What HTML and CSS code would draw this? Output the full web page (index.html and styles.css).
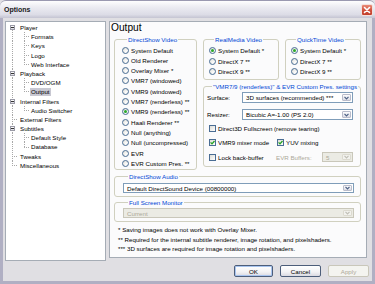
FILE: index.html
```html
<!DOCTYPE html>
<html lang="en">
<head>
  <meta charset="UTF-8" />
  <meta name="viewport" content="width=device-width, initial-scale=1.0"/>
  <title>Options</title>
  <link rel="stylesheet" href="styles.css">
</head>
<body>
  <div class="window">

    <!-- Title bar -->
    <div class="titlebar">
      <span class="title">Options</span>
      <span class="close-btn">
        <svg width="12" height="12" viewBox="0 0 12 12">
          <path d="M3.5 3.5 L8.5 8.5 M8.5 3.5 L3.5 8.5" stroke="#fff" stroke-width="1.6" stroke-linecap="round"/>
        </svg>
      </span>
    </div>

    <div class="dialog">
      <div class="main">

        <!-- Page tree -->
        <ul class="tree">
          <li class="root first"><span class="toggle"></span>Player</li>
          <li class="child">Formats</li>
          <li class="child">Keys</li>
          <li class="child">Logo</li>
          <li class="child last">Web Interface</li>
          <li class="root"><span class="toggle"></span>Playback</li>
          <li class="child">DVD/OGM</li>
          <li class="child last"><span class="selected">Output</span></li>
          <li class="root"><span class="toggle"></span>Internal Filters</li>
          <li class="child last">Audio Switcher</li>
          <li class="root leaf">External Filters</li>
          <li class="root"><span class="toggle"></span>Subtitles</li>
          <li class="child">Default Style</li>
          <li class="child last">Database</li>
          <li class="root leaf">Tweaks</li>
          <li class="root leaf end">Miscellaneous</li>
        </ul>

        <!-- Output page -->
        <div class="page">
          <h1>Output</h1>

          <div class="video-row">
            <fieldset class="group ds-video">
              <legend>DirectShow Video</legend>
              <label class="radio"><span class="dot"></span>System Default</label>
              <label class="radio"><span class="dot"></span>Old Renderer</label>
              <label class="radio"><span class="dot"></span>Overlay Mixer *</label>
              <label class="radio"><span class="dot"></span>VMR7 (windowed)</label>
              <label class="radio"><span class="dot"></span>VMR9 (windowed)</label>
              <label class="radio"><span class="dot"></span>VMR7 (renderless) **</label>
              <label class="radio"><span class="dot checked"></span>VMR9 (renderless) **</label>
              <label class="radio"><span class="dot"></span>Haali Renderer **</label>
              <label class="radio"><span class="dot"></span>Null (anything)</label>
              <label class="radio"><span class="dot"></span>Null (uncompressed)</label>
              <label class="radio"><span class="dot"></span>EVR</label>
              <label class="radio"><span class="dot"></span>EVR Custom Pres. **</label>
            </fieldset>

            <div class="right-col">
              <div class="small-groups">
                <fieldset class="group small">
                  <legend>RealMedia Video</legend>
                  <label class="radio"><span class="dot checked"></span>System Default *</label>
                  <label class="radio"><span class="dot"></span>DirectX 7 **</label>
                  <label class="radio"><span class="dot"></span>DirectX 9 **</label>
                </fieldset>
                <fieldset class="group small">
                  <legend>QuickTime Video</legend>
                  <label class="radio"><span class="dot checked"></span>System Default *</label>
                  <label class="radio"><span class="dot"></span>DirectX 7 **</label>
                  <label class="radio"><span class="dot"></span>DirectX 9 **</label>
                </fieldset>
              </div>

              <fieldset class="group vmr">
                <legend>"VMR7/9 (renderless)" &amp; EVR Custom Pres. settings</legend>
                <div class="combo-row">
                  <span class="field-label">Surface:</span>
                  <div class="combo"><span class="combo-text">3D surfaces (recommended) ***</span><span class="combo-btn"></span></div>
                </div>
                <div class="combo-row resizer">
                  <span class="field-label">Resizer:</span>
                  <div class="combo"><span class="combo-text">Bicubic A=-1.00 (PS 2.0)</span><span class="combo-btn"></span></div>
                </div>
                <div class="check-row">
                  <label class="check"><span class="box"></span>Direct3D Fullscreen (remove tearing)</label>
                </div>
                <div class="check-row two">
                  <label class="check"><span class="box checked"></span>VMR9 mixer mode</label>
                  <label class="check"><span class="box checked"></span>YUV mixing</label>
                </div>
                <div class="check-row two">
                  <label class="check"><span class="box"></span>Lock back-buffer</label>
                  <div class="evr">
                    <span class="muted">EVR Buffers:</span>
                    <div class="combo disabled small-combo"><span class="combo-text">5</span><span class="combo-btn"></span></div>
                  </div>
                </div>
              </fieldset>
            </div>
          </div>

          <fieldset class="group wide audio">
            <legend>DirectShow Audio</legend>
            <div class="combo"><span class="combo-text">Default DirectSound Device (00800000)</span><span class="combo-btn"></span></div>
          </fieldset>

          <fieldset class="group wide monitor">
            <legend>Full Screen Monitor</legend>
            <div class="combo disabled"><span class="combo-text">Current</span><span class="combo-btn"></span></div>
          </fieldset>

          <div class="notes">
            <p>* Saving images does not work with Overlay Mixer.</p>
            <p>** Required for the internal subtitle renderer, image rotation, and pixelshaders.</p>
            <p>*** 3D surfaces are required for image rotation and pixelshaders.</p>
          </div>
        </div>
      </div>

      <!-- Dialog buttons -->
      <div class="buttons">
        <button class="default">OK</button>
        <button>Cancel</button>
        <button disabled>Apply</button>
      </div>
    </div>
  </div>
</body>
</html>
```

FILE: styles.css
```css
body {
  margin: 0;
  padding: 0;
  font-family: "Liberation Sans", Arial, sans-serif;
  font-size: 6.2px;
  color: #000;
  background: #e0dfe3;
}

.window {
  width: 375px;
  height: 284px;
  display: flex;
  flex-direction: column;
  overflow: hidden;
}

/* Title bar */
.titlebar {
  height: 18px;
  box-sizing: border-box;
  display: flex;
  align-items: center;
  justify-content: space-between;
  padding: 0 2px 0 4px;
  border-top: 1px solid #9a99b0;
  border-radius: 6px 6px 0 0;
  background: linear-gradient(#fefefe, #ececf2 35%, #dcdce6 80%, #c4c4d2);
}

.title {
  font-weight: bold;
  font-size: 7px;
  color: #1a1a1a;
}

.close-btn {
  width: 12px;
  height: 12px;
  box-sizing: border-box;
  display: flex;
  border: 1px solid #f4e0dc;
  border-radius: 2px;
  background: linear-gradient(#e88a76, #cf4f3c 55%, #c23f2c);
}

.close-btn svg {
  margin: -1px;
}

/* Dialog body */
.dialog {
  flex: 1;
  display: flex;
  flex-direction: column;
  background: #e0dfe3;
  border: 3px solid #b0afc3;
  border-top: none;
}

.main {
  display: flex;
  gap: 3px;
  padding: 3px 0 0 2px;
}

/* Tree */
.tree {
  --vdot: repeating-linear-gradient(to bottom, #a8a8a8 0 1px, transparent 1px 2px);
  --hdot: repeating-linear-gradient(to right, #a8a8a8 0 1px, transparent 1px 2px);
  width: 101px;
  height: 240px;
  box-sizing: border-box;
  margin: 0;
  padding: 1px 0 0 0;
  list-style: none;
  background: #fff;
  border: 1px solid #a5acb5;
}

.tree li {
  height: 9.2px;
  line-height: 9.2px;
  display: flex;
  align-items: center;
  white-space: nowrap;
}

.tree li.root {
  padding-left: 4px;
  background: var(--vdot) 6px 0 / 1px 100% no-repeat;
}

.tree li.root.first {
  background: var(--vdot) 6px 100% / 1px 50% no-repeat;
}

.tree li.root.leaf {
  padding-left: 14px;
  background:
    var(--hdot) 6px 50% / 6px 1px no-repeat,
    var(--vdot) 6px 0 / 1px 100% no-repeat;
}

.tree li.root.leaf.end {
  background:
    var(--hdot) 6px 50% / 6px 1px no-repeat,
    var(--vdot) 6px 0 / 1px 50% no-repeat;
}

.tree li.child {
  padding-left: 25px;
  background:
    var(--hdot) 18px 50% / 6px 1px no-repeat,
    var(--vdot) 18px 0 / 1px 100% no-repeat,
    var(--vdot) 6px 0 / 1px 100% no-repeat;
}

.tree li.child.last {
  background:
    var(--hdot) 18px 50% / 6px 1px no-repeat,
    var(--vdot) 18px 0 / 1px 50% no-repeat,
    var(--vdot) 6px 0 / 1px 100% no-repeat;
}

.toggle {
  width: 5px;
  height: 5px;
  box-sizing: border-box;
  margin-right: 5px;
  border: 1px solid #9a9aa6;
  background: linear-gradient(#fff, #dcdce4) ;
  display: flex;
  align-items: center;
  justify-content: center;
}

.toggle::after {
  content: "";
  width: 3px;
  height: 1px;
  background: #333;
}

.selected {
  background: #c8c8d2;
  padding: 0 1px;
  margin-left: -1px;
  line-height: 8px;
}

/* Page */
.page {
  width: 258px;
  height: 237px;
  box-sizing: border-box;
  border: 1px solid #a5acb5;
  background: #fbfbfc;
  padding: 0 5px 0 4px;
}

h1 {
  margin: 0 0 0 -3px;
  height: 11px;
  font-size: 10.2px;
  line-height: 11px;
  font-weight: normal;
}

.video-row {
  display: grid;
  grid-template-columns: 83px 158px;
  gap: 6px;
  margin-top: 2.5px;
}

.group {
  margin: 0;
  padding: 0;
  min-width: 0;
  border: 1px solid #d0d0bf;
  border-radius: 3px;
  display: flex;
  flex-direction: column;
}

.group legend {
  margin-left: 5px;
  padding: 0 1px;
  line-height: 7px;
  color: #0046d5;
  white-space: nowrap;
}

.ds-video {
  padding: 2.4px 0 1px 7px;
}

.radio {
  height: 10.3px;
  display: flex;
  align-items: center;
  white-space: nowrap;
}

.dot {
  width: 7px;
  height: 7px;
  box-sizing: border-box;
  margin-right: 2px;
  border: 1px solid #4a6d94;
  border-radius: 50%;
  background: radial-gradient(circle at 65% 70%, #fff, #dcdcd6);
  display: flex;
  align-items: center;
  justify-content: center;
}

.dot.checked::after {
  content: "";
  width: 3px;
  height: 3px;
  border-radius: 50%;
  background: #2aaa2a;
}

.right-col {
  display: flex;
  flex-direction: column;
}

.small-groups {
  display: grid;
  grid-template-columns: 1fr 1fr;
  gap: 6px;
}

.small {
  padding: 3.3px 0 2.2px 5px;
}

.vmr {
  margin-top: 3.5px;
  padding: 2px 7px 4px 3px;
}

.combo-row {
  display: flex;
  align-items: center;
}

.combo-row.resizer {
  margin-top: 5.7px;
}

.field-label {
  width: 35px;
}

.combo {
  flex: 1;
  height: 11px;
  box-sizing: border-box;
  display: flex;
  align-items: center;
  border: 1px solid #7f9db9;
  background: #fff;
  padding: 1px;
}

.combo-text {
  flex: 1;
  padding-left: 2px;
  white-space: nowrap;
  overflow: hidden;
}

.combo-btn {
  width: 9px;
  align-self: stretch;
  box-sizing: border-box;
  border: 1px solid #b9bccb;
  border-radius: 1px;
  background:
    url("data:image/svg+xml;utf8,<svg xmlns='http://www.w3.org/2000/svg' width='5' height='4'><path d='M0.5 0.8 L2.5 2.8 L4.5 0.8' fill='none' stroke='%234d6185' stroke-width='1.2'/></svg>") center / 5px 4px no-repeat,
    linear-gradient(#fdfdfe, #dadbe4);
}

.combo.disabled {
  border-color: #c9c7ba;
  background: #ebebe4;
  color: #aca899;
}

.combo.disabled .combo-btn {
  border-color: #dcdad0;
  background:
    url("data:image/svg+xml;utf8,<svg xmlns='http://www.w3.org/2000/svg' width='5' height='4'><path d='M0.5 0.8 L2.5 2.8 L4.5 0.8' fill='none' stroke='%23c0bfb6' stroke-width='1.2'/></svg>") center / 5px 4px no-repeat,
    #f2f2ee;
}

.check-row {
  height: 10px;
  display: flex;
  align-items: center;
  margin-top: 3.5px;
  padding-left: 2px;
}

.check-row.two {
  display: grid;
  grid-template-columns: 68px 1fr;
  align-items: center;
  margin-top: 4.4px;
}

.check {
  display: flex;
  align-items: center;
  white-space: nowrap;
}

.box {
  width: 7px;
  height: 7px;
  box-sizing: border-box;
  margin-right: 2px;
  border: 1px solid #4a6d94;
  background: linear-gradient(135deg, #dcdcd6, #fff);
  display: flex;
}

.box.checked {
  background:
    url("data:image/svg+xml;utf8,<svg xmlns='http://www.w3.org/2000/svg' width='5' height='5'><path d='M0.6 2.4 L2 3.9 L4.5 1' fill='none' stroke='%2321a121' stroke-width='1.3'/></svg>") center / 5px 5px no-repeat,
    linear-gradient(135deg, #dcdcd6, #fff);
}

.evr {
  display: flex;
  align-items: center;
  justify-content: space-between;
  margin-left: -1px;
}

.muted {
  color: #aca899;
}

.small-combo {
  flex: 0 0 31px;
  height: 10px;
}

.wide {
  margin-top: 2.5px;
}

.audio {
  padding: 3.5px 6px 2.7px 8px;
}

.monitor {
  margin-top: 1.5px;
  padding: 2.8px 6px 3px 8px;
}

.wide .combo {
  flex: none;
  height: 10px;
}

.notes {
  margin-top: 2.7px;
  padding-left: 4px;
}

.notes p {
  margin: 0;
  line-height: 9.6px;
  white-space: nowrap;
}

/* Buttons */
.buttons {
  display: flex;
  justify-content: flex-end;
  gap: 7px;
  margin-top: 4px;
  padding-right: 3px;
}

button {
  width: 41px;
  height: 12px;
  padding: 0;
  font-family: inherit;
  font-size: 6.2px;
  color: #000;
  border: 1px solid #4d5e7a;
  border-radius: 2px;
  background: linear-gradient(#ffffff, #f2f2f4 60%, #dadae2);
}

button.default {
  width: 39px;
  box-shadow: inset 0 0 0 1px #a8c4ef;
}

button:disabled {
  color: #aca899;
  border-color: #c9c7ba;
  background: #f4f4f0;
}
```
